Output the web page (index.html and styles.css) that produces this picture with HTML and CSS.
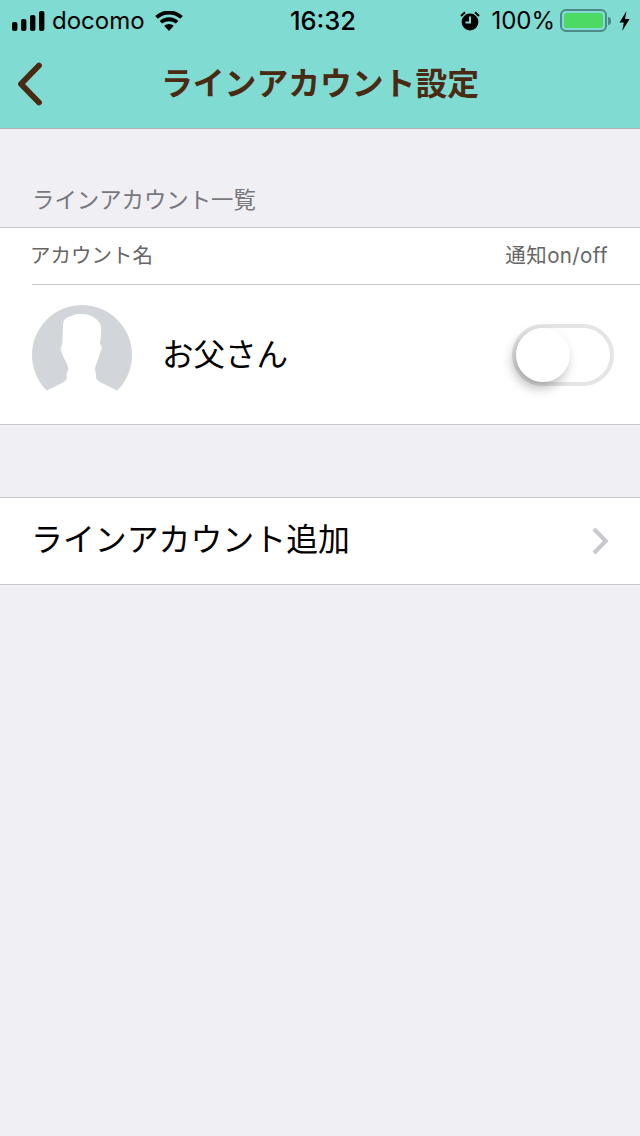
FILE: index.html
```html
<!DOCTYPE html>
<html lang="ja">
<head>
  <meta charset="UTF-8">
  <title>ラインアカウント設定</title>
  <link rel="stylesheet" href="styles.css">
</head>
<body>

  <!-- ヘッダー -->
  <header class="header">
    <div class="status">
      <div class="status-left">
        <svg class="signal" width="33" height="20" viewBox="0 0 33 20">
          <rect x="0" y="11" width="5.4" height="9" rx="2" />
          <rect x="9" y="8" width="5.4" height="12" rx="2" />
          <rect x="18" y="4" width="5.4" height="16" rx="2" />
          <rect x="27" y="0" width="5.4" height="20" rx="2" />
        </svg>
        <span class="carrier">docomo</span>
        <svg class="wifi" width="28" height="20" viewBox="0 0 28 20">
          <path d="M14 20 L9.2 14.8 A7.4 7.4 0 0 1 18.8 14.8 Z" />
          <path d="M7.2 12.6 L4.7 9.9 A14 14 0 0 1 23.3 9.9 L20.8 12.6 A10.6 10.6 0 0 0 7.2 12.6 Z" />
          <path d="M2.8 7.8 L0.2 5 A20 20 0 0 1 27.8 5 L25.2 7.8 A16.6 16.6 0 0 0 2.8 7.8 Z" />
        </svg>
      </div>
      <div class="status-time">16:32</div>
      <div class="status-right">
        <svg class="alarm" width="20" height="20" viewBox="0 0 20 20">
          <circle cx="10" cy="11" r="8.4" fill="#000" />
          <path d="M10 5.5 V11.5 H5.5" fill="none" stroke="#80dbd3" stroke-width="2" />
          <path d="M1 5 L5 1.2 M19 5 L15 1.2" fill="none" stroke="#000" stroke-width="2" />
        </svg>
        <span class="percent">100%</span>
        <div class="battery"><div class="battery-fill"></div></div>
        <div class="battery-nub"></div>
        <svg class="bolt" width="11" height="20" viewBox="0 0 11 20">
          <path d="M7.5 0 L0.5 11.5 H4.8 L3.2 20 L10.6 8 H6 Z" />
        </svg>
      </div>
    </div>
    <div class="nav">
      <svg class="back" width="26" height="44" viewBox="0 0 26 44">
        <path d="M22 3.5 L4 22 L22 40.5" />
      </svg>
      <h1 class="title">ラインアカウント設定</h1>
    </div>
  </header>

  <div class="section-label">ラインアカウント一覧</div>

  <section class="group">
    <div class="col-head">
      <span class="col-name">アカウント名</span>
      <span class="col-notify">通知on/off</span>
    </div>
    <div class="account">
      <svg class="avatar" width="100" height="100" viewBox="0 0 100 100">
        <circle cx="50" cy="50" r="50" fill="#d2d5da" />
        <path fill="#fff" d="M9 88 L14.7 85.7 L31 77.5 C34 75.5 35.5 73.5 34.7 71 C34 68 36.5 66 36.3 63.3 C35.5 59 33 55.5 31.3 51.7 C30.5 49 28.7 47 28.7 43.3 C29 41 30.3 40 30.3 38 C31 32 30.5 24 31.3 18 C32 14 35 12 39.7 11 C43 9 46 9 49.7 9 C55 9 60 10.5 63 13.3 C66 15.5 68.5 18 69 21.7 C69.5 24 69 26 69 28 C69.3 32 68 35 68 38 C68.5 40 69.7 41 69.7 43.3 C69.5 45 68.3 46 68 48 C67 53 64 58 63 63.3 C62.8 66 64.5 68 64 71 C63.5 73.5 65 75.5 69 77.5 L85.3 85.7 L91 88 L100 100 H0 Z" />
      </svg>
      <span class="account-name">お父さん</span>
      <div class="toggle"><div class="knob"></div></div>
    </div>
  </section>

  <section class="group add-group">
    <div class="add-row">
      <span class="add-text">ラインアカウント追加</span>
      <svg class="chevron" width="18" height="28" viewBox="0 0 18 28">
        <path d="M2 2 L13.8 14 L2 26" />
      </svg>
    </div>
  </section>

</body>
</html>
```

FILE: styles.css
```css
body {
  margin: 0;
  min-height: 1136px;
  background: #efeff4;
  color: #000;
  font-family: "Noto Sans CJK JP", "Noto Sans", sans-serif;
  overflow-x: hidden;
}

/* ヘッダー */
.header {
  height: 128px;
  background: #80dbd3;
  border-bottom: 1px solid #b2b2b2;
}

.status {
  display: flex;
  align-items: center;
  justify-content: space-between;
  box-sizing: border-box;
  height: 40px;
  padding: 1px 10px 0 12px;
  font-family: Inter, "Noto Sans", sans-serif;
  font-size: 24px;
}

.status-left,
.status-right {
  display: flex;
  align-items: center;
  width: 220px;
}

.status-right {
  justify-content: flex-end;
}

.signal {
  margin-right: 7px;
}

.wifi {
  margin-left: 10px;
}

.status-time {
  margin-left: 4px;
  font-size: 25.5px;
  font-weight: 500;
}

.percent {
  margin-left: 11px;
  margin-right: 5px;
}

.battery {
  box-sizing: border-box;
  width: 47px;
  height: 23px;
  padding: 2px;
  border: 2px solid #4b8a86;
  border-radius: 6px;
}

.battery-fill {
  height: 100%;
  background: #4cd964;
  border-radius: 3px;
}

.battery-nub {
  width: 3px;
  height: 8px;
  margin-left: 1px;
  background: #4b8a86;
  border-radius: 0 3px 3px 0;
}

.bolt {
  margin-left: 8px;
}

.nav {
  display: flex;
  align-items: center;
  height: 88px;
  padding-left: 17px;
}

.back {
  flex: none;
  fill: none;
  stroke: #4a2a12;
  stroke-width: 5.8;
  stroke-linecap: round;
  stroke-linejoin: round;
}

.title {
  flex: 1;
  margin: 0 43px 6px 0;
  text-align: center;
  color: #4a2a12;
  font-size: 31.8px;
  font-weight: 700;
}

/* リスト */
.section-label {
  height: 98px;
  box-sizing: border-box;
  padding: 53px 0 0 32px;
  color: #77777c;
  font-size: 22.4px;
  line-height: 32px;
}

.group {
  background: #fff;
  border-top: 1px solid #c8c7cc;
  border-bottom: 1px solid #c8c7cc;
}

.col-head {
  display: flex;
  align-items: center;
  justify-content: space-between;
  box-sizing: border-box;
  height: 57px;
  margin-left: 32px;
  padding: 0 32px 5px 0;
  border-bottom: 1px solid #c8c7cc;
  color: #666;
  font-family: Inter, "Noto Sans CJK JP", sans-serif;
  font-size: 20.5px;
}

.col-name {
  margin-left: -2px;
}

.col-notify {
  letter-spacing: 0.4px;
}

.account {
  display: flex;
  align-items: center;
  height: 139px;
  padding: 0 26px 0 32px;
}

.avatar {
  flex: none;
}

.account-name {
  flex: 1;
  margin-left: 30px;
  padding-bottom: 6px;
  font-size: 31.5px;
}

.toggle {
  box-sizing: border-box;
  display: flex;
  align-items: center;
  width: 102px;
  height: 62px;
  border: 4px solid #e5e5e5;
  border-radius: 31px;
  background: #fff;
}

.knob {
  width: 54px;
  height: 54px;
  border-radius: 50%;
  background: #fff;
  box-shadow: -3px 6px 12px rgba(0, 0, 0, 0.28);
}

.add-group {
  margin-top: 72px;
}

.add-row {
  display: flex;
  align-items: center;
  justify-content: space-between;
  height: 86px;
  padding: 0 30px 0 31px;
  font-size: 31.9px;
}

.add-text {
  padding-bottom: 8px;
}

.chevron {
  fill: none;
  stroke: #c7c7cc;
  stroke-width: 4;
}
```
